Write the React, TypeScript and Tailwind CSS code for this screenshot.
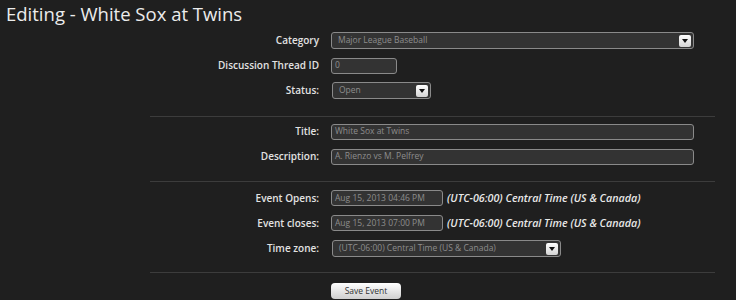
import { ReactNode } from 'react'

const Arrow = () => (
  <span className="flex h-[12px] w-[12px] items-center justify-center rounded-[2px] bg-gradient-to-b from-white to-[#d4d4d4]">
    <svg width="6" height="4" viewBox="0 0 6 4">
      <path d="M0 0h6L3 4z" fill="#111" />
    </svg>
  </span>
)

const Row = ({ label, children }: { label: string; children: ReactNode }) => (
  <div className="flex h-[25px] items-center">
    <div className="w-[170px] pr-[1px] text-right text-[10px] font-semibold text-[#e2e2e2]">{label}</div>
    <div className="ml-[11px] flex flex-1 items-center">{children}</div>
  </div>
)

const Input = ({ value, w }: { value: string; w: string }) => (
  <div className={`flex h-[16px] items-center rounded-[3px] border border-[#8a8a8a] bg-[#333] pl-[3px] text-[8.5px] text-[#8d8d8d] ${w}`}>
    {value}
  </div>
)

const Select = ({ value, w }: { value: string; w: string }) => (
  <div className={`flex h-[17px] items-center justify-between rounded-[3px] border border-[#8a8a8a] bg-[#333] pl-[6px] pr-[2px] text-[8.5px] text-[#8d8d8d] ${w}`}>
    <span>{value}</span>
    <Arrow />
  </div>
)

const Divider = ({ className }: { className: string }) => (
  <div className={`border-t border-[#3c3c3c] ${className}`} />
)

export default function App() {
  return (
    <div className="h-[300px] w-[736px] overflow-hidden bg-[#1f1f1f] font-['Open_Sans',sans-serif]">
      <h1 className="pl-[6px] text-[18.5px] leading-[28px] text-[#ececec]">Editing - White Sox at Twins</h1>
      <div className="ml-[150px] w-[565px]">
        <Row label="Category">
          <Select value="Major League Baseball" w="w-[363px]" />
        </Row>
        <Row label="Discussion Thread ID">
          <Input value="0" w="w-[66px]" />
        </Row>
        <Row label="Status:">
          <div className="ml-[1px]">
            <Select value="Open" w="w-[99px]" />
          </div>
        </Row>
        <Divider className="mt-[13px] mb-[2px]" />
        <Row label="Title:">
          <Input value="White Sox at Twins" w="w-[363px]" />
        </Row>
        <Row label="Description:">
          <Input value="A. Rienzo vs M. Pelfrey" w="w-[363px]" />
        </Row>
        <Divider className="mt-[12px] mb-[4px]" />
        <Row label="Event Opens:">
          <Input value="Aug 15, 2013 04:46 PM" w="w-[112px]" />
          <span className="ml-[4px] text-[10.7px] font-semibold italic text-[#e8e8e8]">(UTC-06:00) Central Time (US &amp; Canada)</span>
        </Row>
        <Row label="Event closes:">
          <Input value="Aug 15, 2013 07:00 PM" w="w-[112px]" />
          <span className="ml-[4px] text-[10.7px] font-semibold italic text-[#e8e8e8]">(UTC-06:00) Central Time (US &amp; Canada)</span>
        </Row>
        <Row label="Time zone:">
          <div className="ml-[1px]">
            <Select value="(UTC-06:00) Central Time (US & Canada)" w="w-[229px]" />
          </div>
        </Row>
        <Divider className="mt-[11px]" />
        <div className="ml-[181px] mt-[10px]">
          <button className="flex h-[16px] w-[70px] items-center justify-center rounded-[4px] bg-gradient-to-b from-white to-[#cfcfcf] text-[8.5px] text-[#333]">
            Save Event
          </button>
        </div>
      </div>
    </div>
  )
}
